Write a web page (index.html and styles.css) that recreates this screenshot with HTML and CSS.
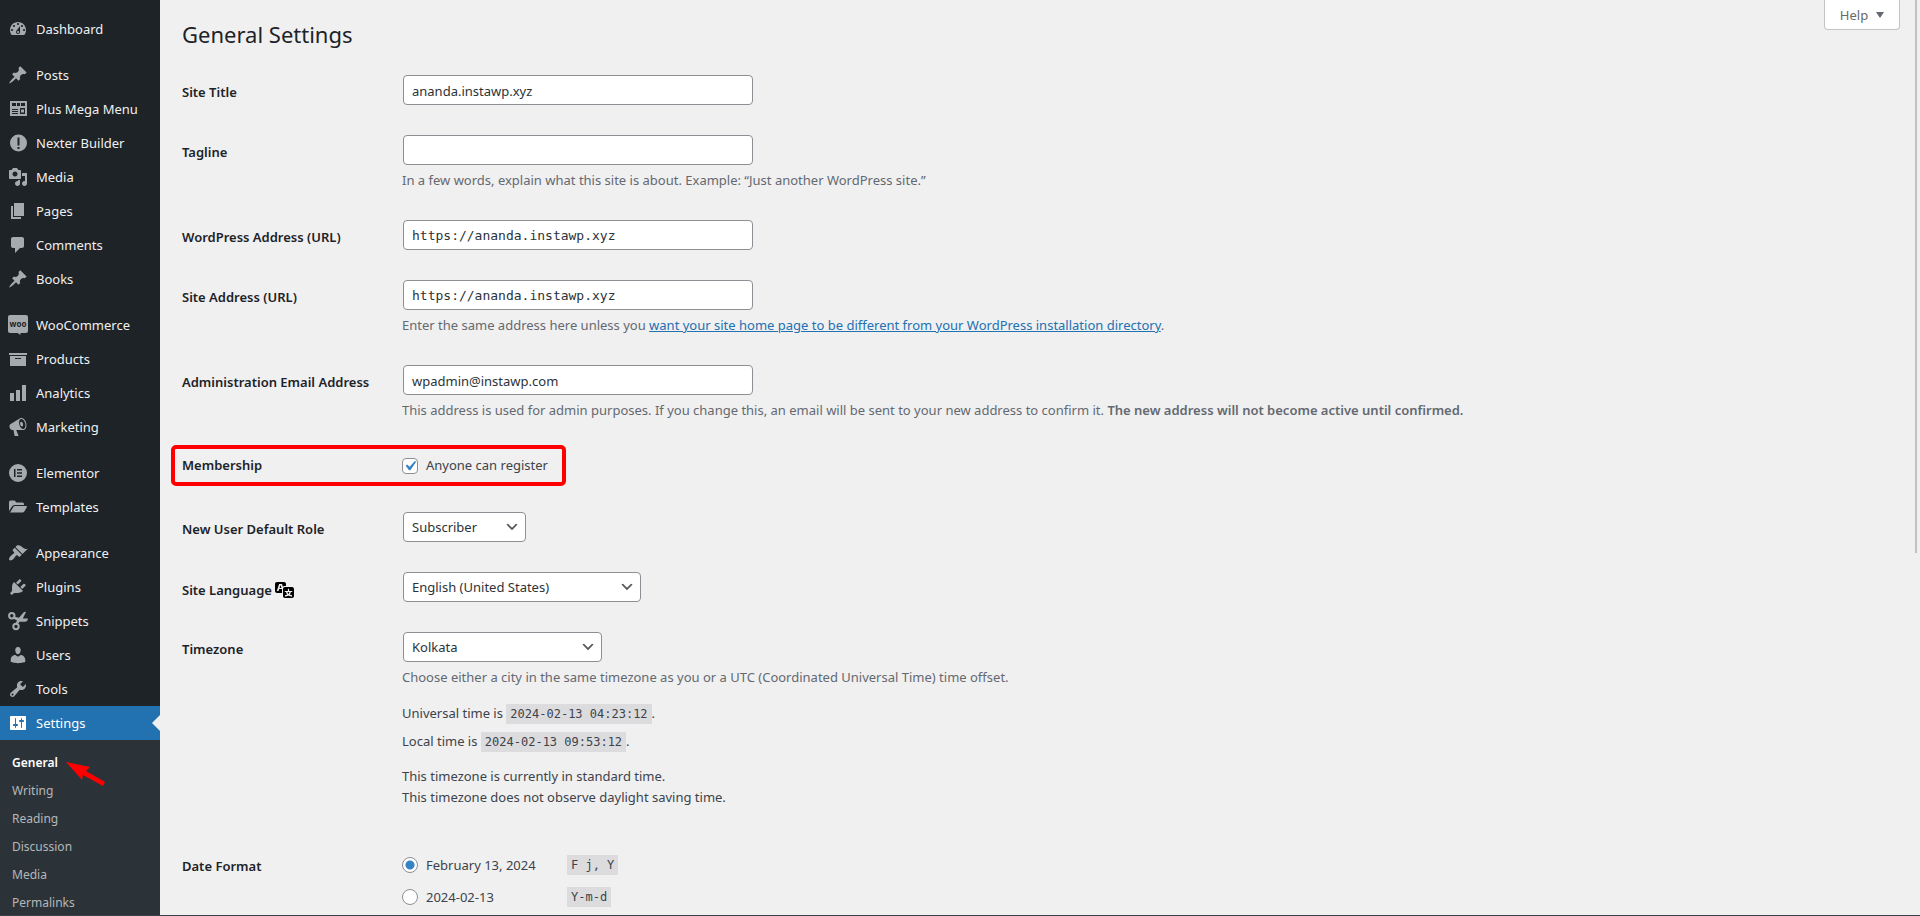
FILE: index.html
```
<!DOCTYPE html>
<html lang="en">
<head>
<meta charset="UTF-8">
<meta name="viewport" content="width=device-width, initial-scale=1.0">
<title>General Settings</title>
<link rel="stylesheet" href="styles.css">
</head>
<body>
<div class="admin">
  <nav class="sidebar">
    <ul class="menu">
      <li><a href="#"><svg class="icon" viewBox="0 0 20 20"><path d="M3.76 16h12.48c1.1-1.37 1.76-3.11 1.76-5 0-4.42-3.58-8-8-8s-8 3.58-8 8c0 1.89.66 3.63 1.76 5zM10 4c.55 0 1 .45 1 1s-.45 1-1 1-1-.45-1-1 .45-1 1-1zM6 6c.55 0 1 .45 1 1s-.45 1-1 1-1-.45-1-1 .45-1 1-1zm8 0c.55 0 1 .45 1 1s-.45 1-1 1-1-.45-1-1 .45-1 1-1zm-5.37 5.55L12 7v6c0 1.1-.9 2-2 2s-2-.9-2-2c0-.57.24-1.08.63-1.45zM4 10c.55 0 1 .45 1 1s-.45 1-1 1-1-.45-1-1 .45-1 1-1zm12 0c.55 0 1 .45 1 1s-.45 1-1 1-1-.45-1-1 .45-1 1-1zm-5 3c0-.55-.45-1-1-1s-1 .45-1 1 .45 1 1 1 1-.45 1-1z"/></svg>Dashboard</a></li>
      <li class="separator"></li>
      <li><a href="#"><svg class="icon" viewBox="0 0 20 20"><path d="M10.44 3.02l1.82-1.82 6.36 6.35-1.83 1.82c-1.05-.68-2.48-.57-3.41.36l-.75.75c-.92.93-1.04 2.35-.35 3.41l-1.83 1.82-2.41-2.41-2.8 2.79c-.42.42-3.38 2.71-3.8 2.29s1.86-3.39 2.28-3.81l2.79-2.79L4.1 9.36l1.83-1.82c1.05.69 2.48.57 3.4-.36l.75-.75c.93-.92 1.05-2.35.36-3.41z"/></svg>Posts</a></li>
      <li><a href="#"><svg class="icon" viewBox="0 0 20 20"><path fill-rule="evenodd" d="M2 2h17v15H2zM4 4v3h13V4zM4 10v1h6v-1zM4 12v1h6v-1zM4 14v1h6v-1zM12 9v6h5V9zM13 10.5h3v3h-3zM8 4v3h1V4zM12 4v3h1V4z"/></svg>Plus Mega Menu</a></li>
      <li><a href="#"><svg class="icon" viewBox="0 0 20 20"><path fill-rule="evenodd" d="M10.5 1.5a8.5 8.5 0 1 0 0 17 8.5 8.5 0 0 0 0-17zM9.5 4.5h2v8h-2zM9.5 14h2v2h-2z"/></svg>Nexter Builder</a></li>
      <li><a href="#"><svg class="icon" viewBox="0 0 20 20"><path d="M13 11V4c0-.55-.45-1-1-1h-1.67L9 1H5L3.67 3H2c-.55 0-1 .45-1 1v7c0 .55.45 1 1 1h10c.55 0 1-.45 1-1zM7 4.5c1.38 0 2.5 1.12 2.5 2.5S8.38 9.5 7 9.5 4.5 8.38 4.5 7 5.62 4.5 7 4.5zM14 6h5v10.5c0 1.38-1.12 2.5-2.5 2.5S14 17.88 14 16.5s1.12-2.5 2.5-2.5c.17 0 .34.02.5.05V9h-3V6zm-4 8.05V13h2v3.5c0 1.38-1.12 2.5-2.5 2.5S7 17.88 7 16.5 8.12 14 9.5 14c.17 0 .34.02.5.05z"/></svg>Media</a></li>
      <li><a href="#"><svg class="icon" viewBox="0 0 20 20"><path d="M6 15V2h10v13H6zm-1 1h8v2H3V5h2v11z"/></svg>Pages</a></li>
      <li><a href="#"><svg class="icon" viewBox="0 0 20 20"><path d="M5 2h9c1.1 0 2 .9 2 2v7c0 1.1-.9 2-2 2h-2l-5 5v-5H5c-1.1 0-2-.9-2-2V4c0-1.1.9-2 2-2z"/></svg>Comments</a></li>
      <li><a href="#"><svg class="icon" viewBox="0 0 20 20"><path d="M10.44 3.02l1.82-1.82 6.36 6.35-1.83 1.82c-1.05-.68-2.48-.57-3.41.36l-.75.75c-.92.93-1.04 2.35-.35 3.41l-1.83 1.82-2.41-2.41-2.8 2.79c-.42.42-3.38 2.71-3.8 2.29s1.86-3.39 2.28-3.81l2.79-2.79L4.1 9.36l1.83-1.82c1.05.69 2.48.57 3.4-.36l.75-.75c.93-.92 1.05-2.35.36-3.41z"/></svg>Books</a></li>
      <li class="separator"></li>
      <li><a href="#"><svg class="icon" viewBox="0 0 20 20"><path d="M2 0h16a2 2 0 0 1 2 2v14a2 2 0 0 1-2 2h-5.500v2l-3-2H2a2 2 0 0 1-2-2V2a2 2 0 0 1 2-2z"/><text class="woo" x="10" y="12" text-anchor="middle">woo</text></svg>WooCommerce</a></li>
      <li><a href="#"><svg class="icon" viewBox="0 0 20 20"><path d="M19 4v2H1V4h18zM2 7h16v10H2V7zm11 3V9H7v1h6z"/></svg>Products</a></li>
      <li><a href="#"><svg class="icon" viewBox="0 0 20 20"><path d="M18 18V2h-4v16h4zm-6 0V7H8v11h4zm-6 0v-8H2v8h4z"/></svg>Analytics</a></li>
      <li><a href="#"><svg class="icon" viewBox="0 0 20 20"><path d="M18.15 5.94c.46 1.62.38 3.22-.02 4.48-.42 1.28-1.26 2.18-2.3 2.48-.16.06-.26.06-.4.06-.06.02-.12.02-.18.02-.06.02-.14.02-.22.02h-6.8l2.22 5.5c.02.14-.06.26-.14.34-.08.1-.24.16-.34.16H6.95c-.1 0-.26-.06-.34-.16-.08-.08-.16-.2-.14-.34l-1-5.5H4.25l-.02-.02c-.5.06-1.08-.18-1.54-.62s-.88-1.08-1.06-1.88c-.24-.8-.2-1.56-.02-2.2.18-.62.58-1.08 1.06-1.3l.02-.02 9-5.4c.1-.06.18-.1.24-.16.06-.04.14-.08.24-.12.16-.08.28-.12.5-.18 1.04-.3 2.24.1 3.22.98s1.84 2.24 2.26 3.86zm-2.58 5.98h-.02c.4-.1.74-.34 1.04-.7.58-.7.86-1.76.86-3.04 0-.64-.1-1.3-.28-1.98-.34-1.36-1.02-2.5-1.78-3.24s-1.68-1.1-2.46-.88c-.82.22-1.4.96-1.7 2-.32 1.04-.28 2.36.06 3.72.38 1.36 1 2.5 1.8 3.24.78.74 1.62 1.1 2.48.88zm-2.54-7.08c.22-.04.42-.02.62.04.38.16.76.48 1.02 1s.42 1.2.42 1.78c0 .3-.04.56-.12.8-.18.48-.44.84-.86.94-.34.1-.8-.06-1.14-.4s-.64-.86-.78-1.5c-.18-.62-.12-1.24.02-1.72s.48-.84.82-.94z"/></svg>Marketing</a></li>
      <li class="separator"></li>
      <li><a href="#"><svg class="icon" viewBox="0 0 20 20"><path fill-rule="evenodd" d="M10 1a9 9 0 1 0 0 18 9 9 0 0 0 0-18zM6 6h1.500v8H6zM9 6h5v1.500H9zM9 9.200h5v1.500H9zM9 12.500h5V14H9z"/></svg>Elementor</a></li>
      <li><a href="#"><svg class="icon" viewBox="0 0 20 20"><path d="M1 14V5q0-1.500 1.500-1.500h4L8.500 5.500h6Q16 5.500 16 7v1H6.500Q5 8 4 9.500zM2 15.500L5.500 9.800Q6 9 7 9h11q1.500 0 .8 1.200l-2.500 4.300q-.6 1-1.800 1z"/></svg>Templates</a></li>
      <li class="separator"></li>
      <li><a href="#"><svg class="icon" viewBox="0 0 20 20"><path d="M14.48 11.06L7.41 3.99l1.5-1.5c.5-.56 2.3-.47 3.51.32 1.21.8 1.43 1.28 2.91 2.1 1.18.64 2.45 1.26 4.45.85zm-.71.71L6.7 4.7 4.93 6.47c-.39.39-.39 1.02 0 1.41l1.06 1.06c.39.39.39 1.03 0 1.42-.6.6-1.43 1.11-2.21 1.69-.35.26-.7.53-1.01.84C1.43 14.23.4 16.08 1.4 17.07c.99 1 2.84-.03 4.18-1.36.31-.31.58-.66.85-1.02.57-.78 1.08-1.61 1.69-2.21.39-.39 1.02-.39 1.41 0l1.06 1.06c.39.39 1.02.39 1.41 0z"/></svg>Appearance</a></li>
      <li><a href="#"><svg class="icon" viewBox="0 0 20 20"><path d="M13.11 4.36L9.87 7.6 8 5.73l3.24-3.24c.35-.34 1.05-.2 1.56.32.52.51.66 1.21.31 1.55zm-8 1.77l.91-1.12 9.01 9.01-1.19.84c-.71.71-2.63 1.16-3.82 1.16H6.14L4.9 17.26c-.59.59-1.54.59-2.12 0-.59-.58-.59-1.53 0-2.12l1.24-1.24v-3.88c0-1.13.4-3.19 1.09-3.89zm7.26 3.97l3.24-3.24c.34-.35 1.04-.21 1.55.31.52.51.66 1.21.31 1.55l-3.24 3.25z"/></svg>Plugins</a></li>
      <li><a href="#"><svg class="icon" viewBox="0 0 20 20"><g fill="none" stroke="currentColor" stroke-width="2"><circle cx="3.800" cy="4.800" r="2.700"/><circle cx="8" cy="15.500" r="2.700"/></g><path d="M5.500 5.500l5.500 1.300 4.500-5.300q1-1.200 2.500-.5l-3.200 6.500H20q-.3 3-3 3.300h-5.500L9 14l-2-.5 2-4L5 7.500z"/></svg>Snippets</a></li>
      <li><a href="#"><svg class="icon" viewBox="0 0 20 20"><path d="M10 9.25c-2.27 0-2.73-3.44-2.73-3.44C7 4.02 7.82 2 9.97 2c2.16 0 2.98 2.02 2.71 3.81 0 0-.41 3.44-2.68 3.44zm0 2.57L12.72 10c2.39 0 4.52 2.33 4.52 4.53v2.49s-3.65 1.13-7.24 1.13c-3.65 0-7.24-1.13-7.24-1.13v-2.49c0-2.25 1.94-4.48 4.47-4.48z"/></svg>Users</a></li>
      <li><a href="#"><svg class="icon" viewBox="0 0 20 20"><path d="M16.68 9.77c-1.34 1.34-3.3 1.67-4.95.99l-5.41 6.52c-.99.99-2.59.99-3.58 0s-.99-2.59 0-3.57l6.52-5.42c-.68-1.65-.35-3.61.99-4.95 1.28-1.28 3.12-1.62 4.72-1.06l-2.89 2.89 2.82 2.82 2.86-2.87c.53 1.58.18 3.39-1.08 4.65zM3.81 16.21c.4.39 1.04.39 1.43 0 .4-.4.4-1.04 0-1.43-.39-.4-1.03-.4-1.43 0-.39.39-.39 1.03 0 1.43z"/></svg>Tools</a></li>
      <li class="current"><a href="#"><svg class="icon" viewBox="0 0 20 20"><path d="M18 16V4c0-.55-.45-1-1-1H3c-.55 0-1 .45-1 1v12c0 .55.45 1 1 1h14c.55 0 1-.45 1-1zM8 11h1c.55 0 1 .45 1 1s-.45 1-1 1H8v1.5c0 .28-.22.5-.5.5s-.5-.22-.5-.5V13H6c-.55 0-1-.45-1-1s.45-1 1-1h1V5.5c0-.28.22-.5.5-.5s.5.22.5.5V11zm5-2h-1c-.55 0-1-.45-1-1s.45-1 1-1h1V5.5c0-.28.22-.5.5-.5s.5.22.5.5V7h1c.55 0 1 .45 1 1s-.45 1-1 1h-1v5.5c0 .28-.22.5-.5.5s-.5-.22-.5-.5V9z"/></svg>Settings</a></li>
    </ul>
    <ul class="submenu">
      <li class="active"><a href="#">General</a>
        <svg class="arrow" viewBox="0 0 42 28"><path d="M1 2l24 5-4 4 19 11-2 4-20-11-1 5z"/></svg>
      </li>
      <li><a href="#">Writing</a></li>
      <li><a href="#">Reading</a></li>
      <li><a href="#">Discussion</a></li>
      <li><a href="#">Media</a></li>
      <li><a href="#">Permalinks</a></li>
    </ul>
  </nav>

  <main class="content">
    <button type="button" class="help">Help</button>
    <h1>General Settings</h1>
    <form>
      <div class="row">
        <label class="name" for="blogname">Site Title</label>
        <div class="field"><input type="text" id="blogname" class="text" value="ananda.instawp.xyz"></div>
      </div>
      <div class="row">
        <label class="name" for="tagline">Tagline</label>
        <div class="field">
          <input type="text" id="tagline" class="text" value="">
          <p class="description">In a few words, explain what this site is about. Example: “Just another WordPress site.”</p>
        </div>
      </div>
      <div class="row">
        <label class="name" for="siteurl">WordPress Address (URL)</label>
        <div class="field"><input type="url" id="siteurl" class="text code-text" value="https://ananda.instawp.xyz"></div>
      </div>
      <div class="row">
        <label class="name" for="home">Site Address (URL)</label>
        <div class="field">
          <input type="url" id="home" class="text code-text" value="https://ananda.instawp.xyz">
          <p class="description">Enter the same address here unless you <a href="#">want your site home page to be different from your WordPress installation directory</a>.</p>
        </div>
      </div>
      <div class="row">
        <label class="name" for="email">Administration Email Address</label>
        <div class="field">
          <input type="email" id="email" class="text" value="wpadmin@instawp.com">
          <p class="description">This address is used for admin purposes. If you change this, an email will be sent to your new address to confirm it. <strong>The new address will not become active until confirmed.</strong></p>
        </div>
      </div>
      <div class="row membership">
        <span class="name">Membership</span>
        <div class="field"><label class="option"><input type="checkbox" checked>Anyone can register</label></div>
      </div>
      <div class="row">
        <label class="name" for="role">New User Default Role</label>
        <div class="field"><select id="role" class="role"><option>Subscriber</option></select></div>
      </div>
      <div class="row">
        <label class="name" for="language">Site Language <svg class="translate" viewBox="0 0 20 20"><path d="M11 7H9.49c-.63 0-1.25.3-1.59.7L7 5H4.13l-2.39 7h1.69l.74-2H7v4H2c-1.1 0-2-.9-2-2V5c0-1.1.9-2 2-2h7c1.1 0 2 .9 2 2v2zM6.51 9H4.49l1-2.93zM10 8h7c1.1 0 2 .9 2 2v7c0 1.1-.9 2-2 2h-7c-1.1 0-2-.9-2-2v-7c0-1.1.9-2 2-2zm7.25 5v-1.08h-3.17V9.75h-1.16v2.17H9.75V13h1.28c.11.85.56 1.85 1.28 2.62-.87.36-1.89.62-2.31.62-.01.02.22.97.2 1.46.84 0 2.21-.5 3.28-1.15 1.09.65 2.48 1.15 3.34 1.15-.02-.49.2-1.44.2-1.46-.43 0-1.49-.27-2.38-.63.7-.77 1.14-1.77 1.25-2.61h1.36zm-3.81 1.93c-.5-.46-.85-1.13-1.01-1.93h2.09c-.17.8-.51 1.47-1 1.93l-.04.03s-.03-.02-.04-.03z"/></svg></label>
        <div class="field"><select id="language" class="language"><option>English (United States)</option></select></div>
      </div>
      <div class="row">
        <label class="name" for="timezone">Timezone</label>
        <div class="field">
          <select id="timezone" class="timezone"><option>Kolkata</option></select>
          <p class="description">Choose either a city in the same timezone as you or a UTC (Coordinated Universal Time) time offset.</p>
          <p class="times">Universal time is <code>2024-02-13 04:23:12</code>.<br>Local time is <code>2024-02-13 09:53:12</code>.</p>
          <p class="note">This timezone is currently in standard time.<br>This timezone does not observe daylight saving time.</p>
        </div>
      </div>
      <div class="row date-format">
        <span class="name">Date Format</span>
        <div class="field">
          <label class="option"><input type="radio" name="date" checked><span class="format">February 13, 2024</span><code>F j, Y</code></label>
          <label class="option"><input type="radio" name="date"><span class="format">2024-02-13</span><code>Y-m-d</code></label>
        </div>
      </div>
    </form>
  </main>
  <div class="scroll-thumb"></div>
</div>
</body>
</html>
```
FILE: styles.css
```
*, *::before, *::after {
  box-sizing: border-box;
}
body {
  margin: 0;
  background: #f0f0f1;
  color: #3c434a;
  font-family: "Noto Sans", "Open Sans", sans-serif;
  font-size: 13px;
  line-height: 21px;
}
.admin {
  position: relative;
  display: flex;
  height: 100vh;
  overflow: hidden;
  border-bottom: 1px solid #3c3f4a;
}

/* sidebar */
.sidebar {
  flex: 0 0 160px;
  padding-top: 12px;
  background: #1d2327;
}
.menu, .submenu {
  margin: 0;
  padding: 0;
  list-style: none;
}
.menu a {
  display: flex;
  align-items: center;
  gap: 8px;
  height: 34px;
  padding-left: 8px;
  color: #f0f0f1;
  text-decoration: none;
}
.icon {
  width: 20px;
  height: 20px;
  fill: currentColor;
  color: #a7aaad;
}
.woo {
  fill: #1d2327;
  font-size: 8px;
  font-weight: 700;
}
.separator {
  height: 12px;
}
.current {
  position: relative;
  background: #2271b1;
}
.current a, .current .icon {
  color: #fff;
}
.current::after {
  content: "";
  position: absolute;
  right: 0;
  top: 9px;
  border: 8px solid transparent;
  border-left: 0;
  border-right-color: #f0f0f1;
}
.submenu {
  height: 300px;
  padding-top: 9px;
  background: #2c3338;
}
.submenu li {
  position: relative;
  height: 28px;
  padding-left: 12px;
  line-height: 28px;
  font-size: 12px;
}
.submenu a {
  color: #b4b7ba;
  text-decoration: none;
}
.submenu .active a {
  color: #fff;
  font-weight: 600;
}
.arrow {
  position: absolute;
  left: 65px;
  top: 11px;
  width: 42px;
  height: 28px;
  fill: #f00;
}

/* content */
.content {
  position: relative;
  flex: 1;
  padding: 18px 20px 0 22px;
}
h1 {
  margin: 0 0 10px;
  color: #1d2327;
  font-size: 22px;
  font-weight: 400;
  line-height: 32px;
}
.help {
  position: absolute;
  top: 0;
  right: 20px;
  width: 76px;
  height: 30px;
  padding: 2px 6px 0;
  border: 1px solid #c3c4c7;
  border-top: 0;
  border-radius: 0 0 4px 4px;
  background: #fff;
  color: #646970;
  font: inherit;
}
.help::after {
  content: "";
  display: inline-block;
  margin-left: 8px;
  border: 4px solid transparent;
  border-top: 6px solid #646970;
  border-bottom: 0;
  vertical-align: 2px;
}
.row {
  display: grid;
  grid-template-columns: 220px 1fr;
  padding: 15px 0;
}
.name {
  padding-top: 7px;
  color: #1d2327;
  font-weight: 600;
}
.text, select {
  display: block;
  height: 30px;
  margin: 0 1px;
  padding: 0 8px;
  border: 1px solid #8c8f94;
  border-radius: 4px;
  background: #fff;
  color: #2c3338;
  font: inherit;
}
.text {
  width: 350px;
  padding-top: 2px;
}
.code-text {
  padding-top: 0;
  font-family: "DejaVu Sans Mono", monospace;
}
select {
  appearance: none;
  background: #fff url("data:image/svg+xml,%3Csvg xmlns='http://www.w3.org/2000/svg' viewBox='0 0 20 20'%3E%3Cpath d='M5 6l5 5 5-5 2 1-7 7-7-7z' fill='%23555'/%3E%3C/svg%3E") no-repeat right 5px center;
  background-size: 16px 16px;
}
.role {
  width: 123px;
}
.language {
  width: 238px;
}
.timezone {
  width: 199px;
}
p {
  margin: 0;
}
.description {
  margin-top: 5px;
  color: #646970;
  line-height: 20px;
}
.description a {
  color: #2271b1;
}
strong {
  font-weight: 600;
}
.translate {
  width: 20px;
  height: 20px;
  vertical-align: -4px;
}
.option {
  display: flex;
  align-items: center;
}
.option input {
  appearance: none;
  width: 16px;
  height: 16px;
  margin: 0 8px 0 0;
  border: 1px solid #8c8f94;
  border-radius: 4px;
  background: #fff;
}
.option input[type="radio"] {
  border-radius: 50%;
}
.option input[type="radio"]:checked {
  background: radial-gradient(circle, #3582c4 4px, #fff 5px);
}
.option input[type="checkbox"]:checked {
  background: #fff url("data:image/svg+xml,%3Csvg xmlns='http://www.w3.org/2000/svg' viewBox='0 0 20 20'%3E%3Cpath d='M14.83 4.89l1.34.94-5.81 8.38H9.02L5.78 9.67l1.34-1.25 2.57 2.4z' fill='%233582c4'/%3E%3C/svg%3E") center / 20px 20px;
}
.membership {
  position: relative;
  padding: 20px 0 21px;
}
.membership .name {
  padding-top: 0;
}
.membership::after {
  content: "";
  position: absolute;
  left: -11px;
  top: 10px;
  width: 395px;
  height: 41px;
  border: 4px solid #f00;
  border-radius: 5px;
}
code {
  padding: 3px 4px;
  background: #dcdcde;
  font-family: "DejaVu Sans Mono", monospace;
  font-size: 12px;
  line-height: 14px;
}
.times {
  margin-top: 12px;
  line-height: 28px;
}
.note {
  margin-top: 11px;
}
.date-format {
  padding-top: 26px;
}
.date-format .option {
  height: 32px;
}
.format {
  width: 141px;
}
.scroll-thumb {
  position: absolute;
  right: 3px;
  top: 0;
  width: 2px;
  height: 553px;
  background: #c1c1c1;
}
```
